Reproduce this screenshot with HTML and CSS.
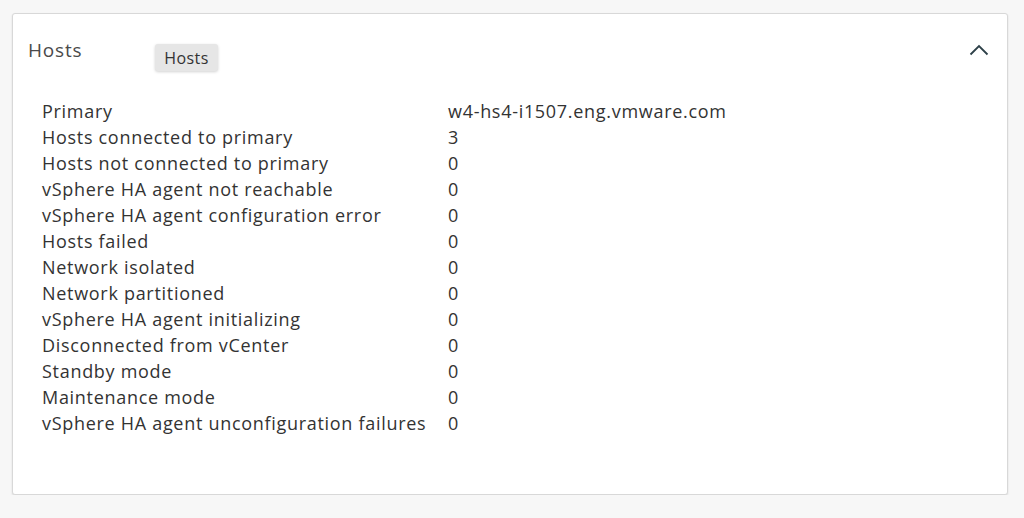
FILE: index.html
```html
<!DOCTYPE html>
<html>
<head>
<meta charset="utf-8">
<link rel="stylesheet" href="styles.css">
</head>
<body>
<section class="card">
  <header class="card-header">
    <h2 class="card-title">Hosts</h2>
    <span class="tooltip">Hosts</span>
    <button class="toggle" aria-label="Collapse">
      <svg width="20" height="12" viewBox="0 0 20 12"><path d="M1.5 10.5 L10 2 L18.5 10.5" fill="none" stroke="#2d4048" stroke-width="1.8"/></svg>
    </button>
  </header>
  <dl class="props">
    <dt>Primary</dt><dd>w4-hs4-i1507.eng.vmware.com</dd>
    <dt>Hosts connected to primary</dt><dd>3</dd>
    <dt>Hosts not connected to primary</dt><dd>0</dd>
    <dt>vSphere HA agent not reachable</dt><dd>0</dd>
    <dt>vSphere HA agent configuration error</dt><dd>0</dd>
    <dt>Hosts failed</dt><dd>0</dd>
    <dt>Network isolated</dt><dd>0</dd>
    <dt>Network partitioned</dt><dd>0</dd>
    <dt>vSphere HA agent initializing</dt><dd>0</dd>
    <dt>Disconnected from vCenter</dt><dd>0</dd>
    <dt>Standby mode</dt><dd>0</dd>
    <dt>Maintenance mode</dt><dd>0</dd>
    <dt>vSphere HA agent unconfiguration failures</dt><dd>0</dd>
  </dl>
</section>
</body>
</html>
```
FILE: styles.css
```css
html, body {
  margin: 0;
  background: #f7f7f7;
}
body {
  padding: 13px 16px 0 12px;
  font-family: "Open Sans", "Noto Sans", sans-serif;
  color: #333;
}
.card {
  background: #fff;
  border: 1px solid #d8d8d8;
  border-radius: 3px;
  box-shadow: 0 1px 2px rgba(0,0,0,0.12);
  box-sizing: border-box;
  height: 482px;
}
.card-header {
  position: relative;
  display: flex;
  align-items: center;
  padding: 23px 18px 0 15px;
  height: 26px;
}
.card-title {
  margin: 0;
  font-size: 19px;
  font-weight: 400;
  letter-spacing: 0.8px;
  color: #4a4a4a;
  line-height: 26px;
}
.tooltip {
  position: absolute;
  left: 142px;
  top: 30px;
  width: 63px;
  height: 27px;
  padding-top: 1px;
  box-sizing: border-box;
  background: #e6e6e6;
  border-radius: 3px;
  box-shadow: 0 1px 3px rgba(0,0,0,0.18);
  font-size: 16px;
  letter-spacing: 0.4px;
  line-height: 26px;
  text-align: center;
  color: #333;
}
.toggle {
  margin-left: auto;
  border: 0;
  background: none;
  padding: 0;
  width: 20px;
  height: 12px;
  display: flex;
}
.props {
  display: grid;
  grid-template-columns: 406px auto;
  margin: 35px 0 0 29px;
  font-size: 18px;
  letter-spacing: 0.7px;
  line-height: 26px;
}
.props dt, .props dd {
  margin: 0;
  white-space: nowrap;
}
```
